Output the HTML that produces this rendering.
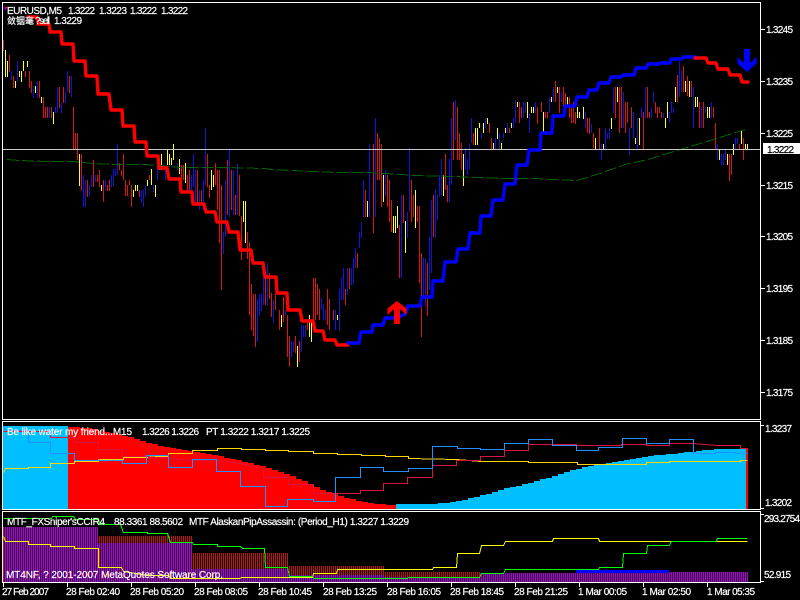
<!DOCTYPE html>
<html>
<head>
<meta charset="utf-8">
<title>EURUSD,M5</title>
<style>
html,body{margin:0;padding:0;background:#000;width:800px;height:600px;overflow:hidden}
svg{display:block;position:absolute;left:0;top:0}
.h{position:absolute}
.s{background:repeating-linear-gradient(90deg,#0000ff 0,#0000ff 1px,#d81010 1px,#d81010 2px)}
.d{background:repeating-linear-gradient(90deg,#000 0,#000 1px,#c81010 1px,#c81010 2px)}
text{font-family:"Liberation Sans","Noto Sans CJK SC",sans-serif;font-size:10px;fill:#fff;stroke:#fff;stroke-width:.2}
.l{fill:none;stroke-width:1;shape-rendering:crispEdges}
.t{fill:none;stroke-width:3.4;stroke-linejoin:round;stroke-linecap:round}
</style>
</head>
<body>
<!-- panel 3 histogram -->
<div class="h s" style="left:2px;top:527px;width:96px;height:55px"></div>
<div class="h d" style="left:98px;top:536px;width:94px;height:7px"></div>
<div class="h s" style="left:98px;top:543px;width:94px;height:39px"></div>
<div class="h d" style="left:192px;top:553px;width:96px;height:16px"></div>
<div class="h s" style="left:192px;top:569px;width:96px;height:13px"></div>
<div class="h d" style="left:288px;top:566px;width:96px;height:9px"></div>
<div class="h s" style="left:288px;top:575px;width:96px;height:7px"></div>
<div class="h d" style="left:384px;top:572px;width:96px;height:5px"></div>
<div class="h s" style="left:384px;top:577px;width:96px;height:5px"></div>
<div class="h s" style="left:480px;top:573px;width:96px;height:9px"></div>
<div class="h" style="left:576px;top:570px;width:93px;height:3px;background:#0000ff"></div>
<div class="h s" style="left:576px;top:573px;width:92px;height:9px"></div>
<div class="h s" style="left:668px;top:572px;width:80px;height:10px"></div>

<svg width="800" height="600" viewBox="0 0 800 600" xmlns="http://www.w3.org/2000/svg">

<!-- price bars -->
<g class="bars" transform="translate(.5 0)">
<path class="l" stroke="#dc1414" d="M3 40V51M9 55V72M13 76V88M25 71V77M29 71V88M31 81V93M39 81V98M43 97V118M45 107V118M47 107V118M51 107V118M59 87V108M63 87V103M69 76V93M73 107V150M75 133V150M77 133V160M81 154V191M87 180V197M93 160V187M97 175V182M99 170V187M103 180V202M107 185V191M109 180V191M119 163V170M121 170V176M123 154V180M125 180V196M127 185V196M129 180V185M131 185V207M139 190V197M149 175V180M181 165V180M183 165V180M187 175V190M189 170V192M197 170V205M201 190V205M207 154V187M209 185V198M215 163V185M217 170V210M219 170V243M221 185V290M227 160V215M231 170V210M235 195V215M239 175V216M241 216V260M247 232V259M249 242V315M251 284V330M253 294V336M255 294V347M265 277V305M269 273V299M271 293V317M275 294V310M279 310V330M283 297V322M287 315V357M289 336V367M295 336V353M299 341V362M307 320V330M313 278V320M315 278V320M317 284V315M319 289V320M327 289V325M329 299V330M333 310V320M345 289V305M349 268V289M357 253V268M365 190V217M373 144V233M377 133V180M379 138V180M381 144V207M387 175V207M389 180V222M391 200V232M399 225V278M403 195V223M411 180V222M413 195V217M417 206V222M419 206V283M421 253V337M427 263V316M433 195V237M445 154V190M447 185V202M453 102V160M457 107V160M459 133V160M461 143V170M473 133V145M489 123V133M491 138V150M509 128V133M519 102V123M521 107V118M537 107V124M541 102V112M545 112V118M547 112V118M555 81V102M559 87V113M563 87V107M565 93V113M569 97V118M571 107V123M573 102V123M575 112V124M587 118V133M589 118V134M593 133V148M599 128V149M615 87V118M619 87V133M621 87V128M625 102V133M627 102V123M631 107V128M643 112V149M647 87V118M649 112V118M655 102V113M657 107V118M659 107V113M661 112V118M677 75V102M683 66V92M687 76V96M691 81V97M699 102V128M703 102V128M713 107V118M715 123V149M729 154V181M731 154V175M739 144V149M743 138V160"/>
<path class="l" stroke="#1414d8" d="M11 71V80M17 61V81M33 86V98M37 81V98M49 107V118M55 107V113M57 87V113M61 102V113M65 92V103M67 71V92M71 76V97M83 175V207M85 180V207M89 185V197M91 175V187M95 175V182M105 180V190M111 175V187M113 169V186M115 169V176M117 144V175M141 190V202M143 190V207M145 185V197M153 185V192M157 165V180M163 165V170M165 168V180M177 163V170M191 175V202M193 154V187M195 170V202M199 190V210M203 180V210M205 128V185M223 232V254M225 180V237M229 149V217M233 170V215M237 164V215M257 299V342M259 294V316M261 294V311M263 278V305M267 263V305M273 300V323M285 310V315M291 341V357M293 341V352M301 325V352M303 325V337M305 325V337M321 298V310M323 304V320M325 310V320M335 310V330M339 289V331M341 278V300M343 268V300M347 268V295M351 268V285M353 258V285M355 248V268M359 232V248M361 222V238M363 180V217M369 144V217M375 118V217M385 170V197M401 195V278M407 212V238M409 148V212M423 258V297M425 258V307M429 237V290M431 200V273M435 190V238M437 195V220M439 175V197M441 159V195M449 159V202M451 118V185M455 100V140M465 148V170M467 159V175M469 144V170M471 118V143M481 133V138M485 118V128M495 138V150M499 133V150M503 133V138M507 123V133M513 118V128M515 100V123M523 102V118M525 102V113M529 113V133M535 102V113M539 137V150M549 97V113M553 87V102M561 92V102M585 112V128M591 124V133M601 144V160M605 128V149M607 133V139M609 128V139M613 87V113M623 92V128M629 128V155M633 112V138M637 118V149M641 107V118M645 87V118M651 107V118M653 92V103M663 113V118M669 112V122M671 102V113M673 107V113M679 61V97M681 71V92M693 87V128M701 107V128M705 107V113M711 102V118M717 144V160M721 154V165M723 154V165M725 149V160M735 138V149M737 138V144"/>
<path class="l" stroke="#ffff20" d="M5 50V77M7 61V77M15 81V88M19 71V77M21 71V82M23 61V71M27 61V67M35 86V93M41 97V103M53 112V124M79 154V186M101 185V191M133 190V197M135 185V191M137 185V191M147 180V186M151 169V185M155 185V197M159 164V170M161 154V170M167 149V165M169 154V165M171 158V165M173 144V160M179 159V174M185 163V183M211 170V190M213 175V187M243 201V222M245 201V243M281 315V327M297 346V367M309 315V337M311 320V342M337 315V320M367 201V217M383 175V202M393 216V233M395 216V233M397 206V228M405 221V253M415 190V228M443 175V196M463 154V186M475 128V145M477 128V145M479 123V128M483 123V133M487 118V124M493 143V150M497 128V139M501 143V150M505 128V133M511 123V128M517 102V107M527 102V118M531 107V113M533 107V113M543 112V133M551 97V102M557 87V93M567 97V107M577 107V118M579 112V118M583 107V119M595 138V149M603 144V149M611 118V129M617 87V102M635 138V144M639 118V145M665 118V128M667 102V118M675 87V102M685 81V92M689 81V97M695 97V107M697 97V107M707 107V118M709 107V118M719 149V160M727 154V165M733 144V155M741 131V144M745 144V149M747 144V149"/>
</g>

<!-- moving average -->
<path fill="none" stroke="#006400" stroke-width="1" stroke-dasharray="12 3" shape-rendering="crispEdges" d="M7 159.5L19 160.5L46 161.5L73 161.5L93 163.5L116 164.5L145 164.5L160 165.5L180 167.5L225 167.5L264 168.5L271 169.5L313 171.5L337 172.5L367 172.5L385 173.5L417 175.5L453 176.5L480 177.5L510 178.5L535 178.5L552 179.5L577 180.5L600 173.5L625 164.5L648 159.5L677 150.5L697 144.5L720 137.5L745 129.5"/>
<!-- current price line -->
<path class="l" stroke="#c8c8c8" d="M3 149.5H760"/>

<!-- step line -->
<path class="t" stroke="#ff0000" d="M28 17H37L38 24H49L50 32H61L62 44H73L74 61H85L86 76H97L98 94H109L111 110H122L123 126H134L135 142H146L147 156H158L159 168H167L169 179H180L181 192H192L193 204H204L206 212H215L217 222H227L229 232H238L240 250H251L253 263H263L265 277H276L277 293H287L288 310H300L302 321H313L315 331H323L325 340H335L337 345H348"/>
<path class="t" stroke="#0000ff" d="M348 343H359L361 332H372L373 325H383L385 318H397L405 314L408 306H420L422 297H432L433 281H443L445 262H456L458 249H468L470 233H480L481 216H491L493 200H503L505 184H515L517 165H527L529 150H540L541 133H552L553 116H564L565 106H575L577 97H587L589 90H597L599 83H609L611 77H621L623 75H634L636 68H646L648 64H659L660 63H670L671 59H682L683 57H695"/>
<path class="t" stroke="#ff0000" d="M695 58H706L708 63H716L718 69H728L730 75H740L742 82H748"/>

<!-- arrows -->
<polygon fill="#ff0000" points="397,301 406.5,308.5 406.5,315 400,309 400,324 394,324 394,309 387.5,315 387.5,308.5"/>
<polygon fill="#0000ff" points="747,72 756.5,63.5 756.5,57 750,63 750,49 744,49 744,63 737.5,57 737.5,63.5"/>

<!-- top-left marker -->
<rect x="3" y="7" width="2" height="3" fill="#0000ff"/>
<polygon points="5,7 8,7 5,10" fill="#ff0000"/>

<!-- panel 2 -->
<rect x="3" y="426" width="65" height="83" fill="#00bfff"/>
<path fill="#ff0000" shape-rendering="crispEdges" d="M68 509V427H80V428H92V429H98V431H104V432H110V433H116V434H122V436H128V437H134V439H140V441H146V443H152V444H158V446H164V447H170V448H176V449H182V450H188V451H194V452H200V453H206V454H212V455H218V456H224V458H230V459H236V460H242V462H248V463H254V465H260V466H266V468H272V470H278V472H284V474H290V476H296V479H302V481H308V484H314V487H320V490H326V492H332V494H338V496H344V498H350V499H356V501H362V502H368V503H374V504H386V505H396V509Z"/>
<path fill="#00bfff" shape-rendering="crispEdges" d="M396 509V504H438V503H450V502H456V501H462V500H468V498H474V497H480V495H486V494H492V492H498V490H504V488H510V487H516V486H522V484H528V483H534V481H540V479H546V478H552V476H558V474H564V472H570V470H576V469H582V467H588V466H594V465H600V464H606V463H612V462H618V461H624V460H630V459H636V458H642V457H648V456H654V455H666V454H678V453H684V452H696V451H702V450H714V449H748V509Z"/>
<rect x="746" y="448" width="2" height="61" fill="#ff0000"/>
<g transform="translate(.5 .5)">
<path class="l" stroke="#ffd700" d="M3 472L5 468H28V467H50V463H74V461H98V459H123V457H147V456H168V453H192V450H217V448H241V449H265V450H288V451H313V453H337V454H361V455H385V456H408V458L456 459L481 461H528V462H577V464H646V462H669V461H740V460H747"/>
<path class="l" stroke="#dc143c" d="M3 431H50V437H74V442H98V449H122V456H146L168 458L192 460H216L240 463L263 468V477H288V484H313V493H360V490H383V483H407V477H432V465H456V460H480V456H504V450H528V444H576V445H621V444H646V445H669V443H693L716 445H740V448H747"/>
<path class="l" stroke="#1e90ff" d="M3 426L5 430H28V442H50V453H74V460H122V463H146V455H168V467H192V459H216V471H240V486H265V506H287V499H313V501H335V477H360V467H383V471H408V468H432V446H457V448H480V449H504V443H528V439H552V445H576V450H598V447H622V438H646V443H669V439H693V453H715V452H735V453H747"/>
</g>

<!-- panel 3 lines -->
<g transform="translate(.5 .5)">
<path class="l" stroke="#ffff00" d="M3 536L5 541H28V544H50V546H74V548H98V567H121L123 571L147 575H168L170 578H239L241 577H312L313 573H336L337 569H432L433 567H456L457 553H479L481 545H503L505 541H552L553 538H598L599 541H747"/>
<path class="l" stroke="#00ff00" d="M3 518H51L52 516H73L75 519H98L99 524H120L123 532H147V533H167L170 542H192L193 544H217V546H240L242 548H264L265 567H287L289 576H312L313 578H407L408 577H479L481 573H503L505 569H598L599 567H622L623 553H646L647 545H669L671 541H716L717 538H747"/>
</g>

<!-- frames -->
<g fill="none" stroke="#fff" shape-rendering="crispEdges">
<rect x="2.5" y="2.5" width="758" height="417"/>
<rect x="2.5" y="421.5" width="758" height="88"/>
<rect x="2.5" y="511.5" width="758" height="71"/>
<path d="M761 29.5H765M761 81.5H765M761 133.5H765M761 185.5H765M761 236.5H765M761 288.5H765M761 340.5H765M761 392.5H765M761 425.5H764M761 508.5H764M761 514.5H764M761 581.5H764M3.5 583V587M67.5 583V587M131.5 583V587M195.5 583V587M259.5 583V587M323.5 583V587M387.5 583V587M451.5 583V587M515.5 583V587M579.5 583V587M643.5 583V587M707.5 583V587"/>
</g>

<!-- current price box -->
<rect x="763" y="143" width="37" height="11" fill="#fff"/>
<text x="767" y="153" textLength="27" lengthAdjust="spacing" style="fill:#000;stroke:#000">1.3222</text>

<!-- price axis -->
<text x="766" y="33" textLength="27" lengthAdjust="spacing">1.3245</text>
<text x="766" y="85" textLength="27" lengthAdjust="spacing">1.3235</text>
<text x="766" y="137" textLength="27" lengthAdjust="spacing">1.3225</text>
<text x="766" y="189" textLength="27" lengthAdjust="spacing">1.3215</text>
<text x="766" y="240" textLength="27" lengthAdjust="spacing">1.3205</text>
<text x="766" y="292" textLength="27" lengthAdjust="spacing">1.3195</text>
<text x="766" y="344" textLength="27" lengthAdjust="spacing">1.3185</text>
<text x="766" y="396" textLength="27" lengthAdjust="spacing">1.3175</text>
<text x="765" y="432" textLength="27" lengthAdjust="spacing">1.3237</text>
<text x="765" y="506" textLength="27" lengthAdjust="spacing">1.3202</text>
<text x="764" y="522" textLength="36" lengthAdjust="spacing">293.2754</text>
<text x="764" y="578" textLength="27" lengthAdjust="spacing">52.915</text>

<!-- chart labels -->
<text x="7" y="14" textLength="55" lengthAdjust="spacing">EURUSD,M5</text>
<text x="68" y="14" textLength="27" lengthAdjust="spacing">1.3222</text>
<text x="99" y="14" textLength="28" lengthAdjust="spacing">1.3223</text>
<text x="130" y="14" textLength="27" lengthAdjust="spacing">1.3222</text>
<text x="161" y="14" textLength="27" lengthAdjust="spacing">1.3222</text>
<text x="7" y="24" textLength="27" lengthAdjust="spacing" style="font-size:9px">敛铟毫</text>
<text x="35" y="24" textLength="15" lengthAdjust="spacing">?sell</text>
<text x="54" y="24" textLength="28" lengthAdjust="spacing">1.3229</text>

<text x="7" y="435" textLength="125" lengthAdjust="spacing">Be like water my friend...M15</text>
<text x="142" y="435" textLength="57" lengthAdjust="spacing">1.3226 1.3226</text>
<text x="206" y="435" textLength="104" lengthAdjust="spacing">PT 1.3222 1.3217 1.3225</text>

<text x="7" y="525" textLength="98" lengthAdjust="spacing">MTF_FXSniper'sCCIR4</text>
<text x="114" y="525" textLength="69" lengthAdjust="spacing">88.3361 88.5602</text>
<text x="189" y="525" textLength="220" lengthAdjust="spacing">MTF AlaskanPipAssassin: (Period_H1) 1.3227 1.3229</text>
<text x="6" y="578" textLength="217" lengthAdjust="spacing">MT4NF, ? 2001-2007 MetaQuotes Software Corp.</text>

<!-- time axis -->
<text x="2" y="595" textLength="47" lengthAdjust="spacing">27 Feb 2007</text>
<text x="66" y="595" textLength="54" lengthAdjust="spacing">28 Feb 02:40</text>
<text x="130" y="595" textLength="54" lengthAdjust="spacing">28 Feb 05:20</text>
<text x="194" y="595" textLength="54" lengthAdjust="spacing">28 Feb 08:05</text>
<text x="258" y="595" textLength="54" lengthAdjust="spacing">28 Feb 10:45</text>
<text x="323" y="595" textLength="54" lengthAdjust="spacing">28 Feb 13:25</text>
<text x="387" y="595" textLength="54" lengthAdjust="spacing">28 Feb 16:05</text>
<text x="450" y="595" textLength="54" lengthAdjust="spacing">28 Feb 18:45</text>
<text x="514" y="595" textLength="54" lengthAdjust="spacing">28 Feb 21:25</text>
<text x="578" y="595" textLength="49" lengthAdjust="spacing">1 Mar 00:05</text>
<text x="642" y="595" textLength="49" lengthAdjust="spacing">1 Mar 02:50</text>
<text x="707" y="595" textLength="48" lengthAdjust="spacing">1 Mar 05:35</text>
</svg>
</body>
</html>
